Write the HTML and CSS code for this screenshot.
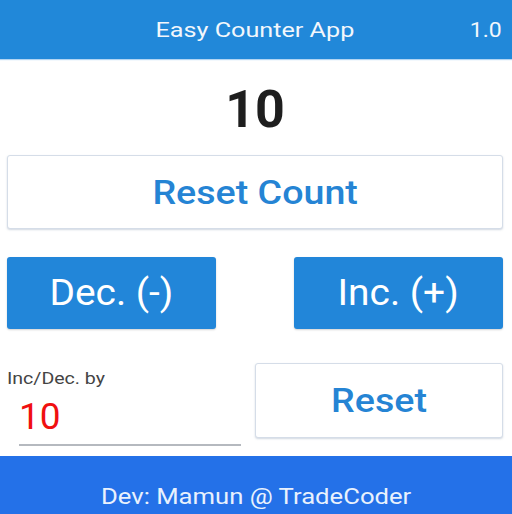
FILE: index.html
```html
<!DOCTYPE html>
<html>
<head>
<meta charset="utf-8">
<link rel="stylesheet" href="styles.css">
</head>
<body>
<div class="app">
  <header class="topbar">
    <span class="title">Easy Counter App</span>
    <span class="version">1.0</span>
  </header>
  <main class="content">
    <div class="count">10</div>
    <button class="btn btn-light btn-wide"><span class="txt txt-md">Reset Count</span></button>
    <div class="row-pair">
      <button class="btn btn-blue"><span class="txt txt-sm">Dec. (-)</span></button>
      <button class="btn btn-blue"><span class="txt txt-sm">Inc. (+)</span></button>
    </div>
    <div class="row-bottom">
      <div class="field">
        <label class="field-label">Inc/Dec. by</label>
        <div class="field-input">10</div>
      </div>
      <button class="btn btn-light btn-reset"><span class="txt txt-md">Reset</span></button>
    </div>
  </main>
  <footer class="footer"><span class="footer-text">Dev: Mamun @ TradeCoder</span></footer>
</div>
</body>
</html>
```
FILE: styles.css
```css
* { box-sizing: border-box; }
html, body { margin: 0; padding: 0; background: #ffffff; }
body { font-family: Roboto, "Noto Sans", sans-serif; }
.app { width: 512px; height: 514px; display: flex; flex-direction: column; overflow: hidden; }
.topbar {
  height: 59px; background: #2188d9; color: #f2f7fc;
  display: flex; align-items: center; justify-content: center; position: relative;
  box-shadow: 0 1px 1px rgba(33,136,217,0.35);
}
.title { display: inline-block; font-size: 21px; margin-right: 3px; transform: scaleX(1.2); }
.version { position: absolute; right: 10px; font-size: 20px; display: inline-block; transform: scaleX(1.15); transform-origin: right center; }
.content { flex: 1; display: flex; flex-direction: column; padding: 0 9px 0 7px; }
.count { text-align: center; font-weight: 700; font-size: 52px; color: #1e1e1e; line-height: 1; padding-top: 25px; height: 96px; }
.btn {
  font-family: Roboto, "Noto Sans", sans-serif; border: none; border-radius: 3px;
  display: flex; align-items: center; justify-content: center; cursor: pointer; padding: 0;
}
.txt { display: inline-block; }
.txt-md { transform: scaleX(1.14); }
.txt-sm { transform: scaleX(1.08); }
.btn-light {
  background: #ffffff; color: #2584d4; font-weight: 500;
  border: 1px solid #d5dde8; box-shadow: 0 1px 2px rgba(120,140,170,0.35);
}
.btn-wide { height: 74px; font-size: 33px; width: 496px; }
.row-pair { display: flex; justify-content: space-between; margin-top: 28px; width: 496px; }
.btn-blue { background: #2286d9; color: #ffffff; width: 209px; height: 72px; font-size: 36px; box-shadow: 0 1px 2px rgba(0,0,0,0.18); }
.row-bottom { display: flex; justify-content: space-between; align-items: flex-start; margin-top: 34px; width: 496px; }
.field { width: 234px; display: flex; flex-direction: column; padding-top: 5px; }
.field-label { font-size: 17px; color: #444444; line-height: 20px; display: inline-block; transform: scaleX(1.15); transform-origin: left center; }
.field-input { margin-left: 12px; color: #f01010; font-size: 37px; line-height: 1; padding-top: 10px; height: 58px; border-bottom: 2px solid #b5b9bf; }
.btn-reset { width: 248px; height: 75px; font-size: 33px; }
.footer { height: 58px; margin-top: auto; background: #2471e8; color: #e9f1fd; display: flex; align-items: flex-end; justify-content: center; padding-bottom: 5px; }
.footer-text { display: inline-block; font-size: 22.5px; transform: scaleX(1.14); }
```
